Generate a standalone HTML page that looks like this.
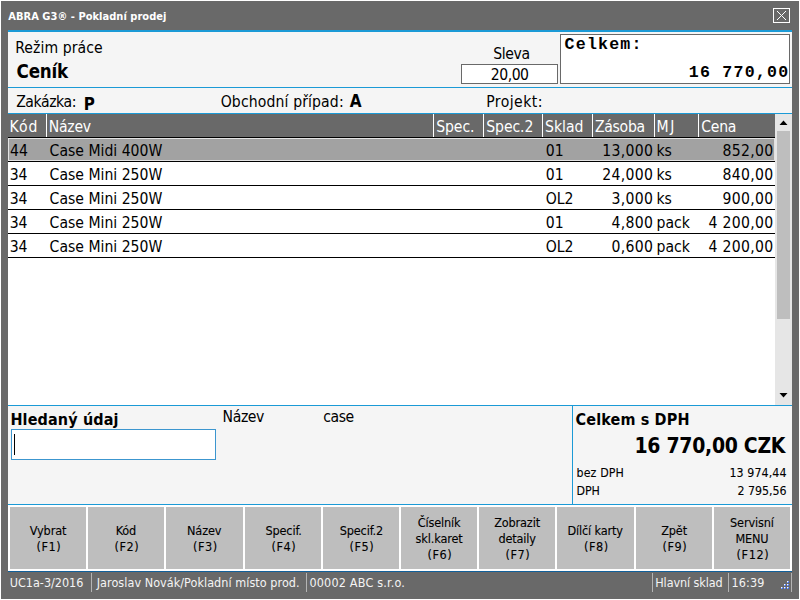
<!DOCTYPE html>
<html lang="cs"><head><meta charset="utf-8"><title>ABRA G3 - Pokladní prodej</title>
<style>
html,body{margin:0;padding:0;width:800px;height:600px;overflow:hidden;background:#fff}
body{position:relative;font-family:"DejaVu Sans Condensed","Liberation Sans",sans-serif;color:#000}
div,span{position:absolute;box-sizing:border-box}
.t{white-space:nowrap;display:block}
.sec{left:0;top:0;width:800px;height:600px}
.frame{left:1px;top:1px;width:798px;height:598px;background:#696969}
.bl{background:#1b9ad6;left:8px;width:784px;height:1px}
.panel{background:#f5f5f5;left:8px;width:784px}
.hsep{top:114px;width:1px;height:23px;background:#fff}
.rl{left:8px;width:767px;height:1px;background:#000}
.btn{top:507px;height:62px;background:#bebebe}
.ssep{top:573px;width:1px;height:19px;background:#b4b4b4}
</style></head><body>
<div class="frame"></div>
<div class="sec" id="titlebar">
<div style="left:773px;top:8px;width:17px;height:15px;border:1px solid #fff"></div>
<svg style="position:absolute;left:773px;top:8px" width="17" height="15" viewBox="0 0 17 15"><path d="M4 3 L13 12 M13 3 L4 12" stroke="#fff" stroke-width="1" fill="none"/></svg>
<span class="t" style="left:8.30px;top:9.80px;font-size:11px;line-height:14px;font-weight:700;color:#fff;letter-spacing:0.026px">ABRA G3® - Pokladní prodej</span>
</div>
<div class="sec" id="header-panel">
<div class="bl" style="top:30px;height:2px"></div>
<div class="panel" style="top:32px;height:55px"></div>
<div class="bl" style="top:87px"></div>
<div class="panel" style="top:88px;height:25px"></div>
<div class="bl" style="top:113px"></div>
<!-- Sleva input -->
<div style="left:461px;top:64px;width:97px;height:20px;background:#fff;border:1px solid #696969"></div>
<!-- Celkem box -->
<div style="left:560px;top:34px;width:230px;height:50px;background:#fff;border:1px solid #696969"></div>
<span class="t" style="left:15.20px;top:37.50px;font-size:15.6px;line-height:20px;letter-spacing:0.076px">Režim práce</span>
<span class="t" style="left:16.60px;top:59.60px;font-size:18.6px;line-height:24px;font-weight:700;letter-spacing:-0.216px">Ceník</span>
<span class="t" style="left:493.20px;top:43.75px;font-size:15.6px;line-height:20px;letter-spacing:-0.36px">Sleva</span>
<span class="t" style="left:490.70px;top:64.75px;font-size:15.6px;line-height:20px;letter-spacing:-0.45px">20,00</span>
<span class="t" style="left:564.60px;top:33.80px;font-size:16.6px;line-height:22px;font-weight:700;font-family:'Liberation Mono', monospace;letter-spacing:1.192px">Celkem:</span>
<span class="t" style="right:10.62px;top:61.70px;font-size:16.6px;line-height:22px;font-weight:700;font-family:'Liberation Mono', monospace;letter-spacing:1.217px">16 770,00</span>
<span class="t" style="left:16.20px;top:92.20px;font-size:15.6px;line-height:20px;letter-spacing:-0.423px">Zakázka:</span>
<span class="t" style="left:83.80px;top:92.90px;font-size:16.8px;line-height:22px;font-weight:700">P</span>
<span class="t" style="left:220.70px;top:92.20px;font-size:15.6px;line-height:20px;letter-spacing:0.128px">Obchodní případ:</span>
<span class="t" style="left:349.80px;top:90.40px;font-size:17px;line-height:22px;font-weight:700">A</span>
<span class="t" style="left:486.20px;top:92.20px;font-size:15.6px;line-height:20px;letter-spacing:0.45px">Projekt:</span>
</div>
<div class="sec" id="grid">
<div style="left:8px;top:114px;width:767px;height:291px;background:#fff"></div>
<div style="left:8px;top:114px;width:767px;height:23px;background:#696969"></div>
<div class="hsep" style="left:46px"></div><div class="hsep" style="left:433px"></div><div class="hsep" style="left:483px"></div><div class="hsep" style="left:542px"></div><div class="hsep" style="left:592px"></div><div class="hsep" style="left:654px"></div><div class="hsep" style="left:698px"></div>
<div class="rl" style="top:137px"></div>
<div style="left:8px;top:138px;width:767px;height:23px;background:#a2a2a2;border:1px solid #e2e2e2"></div>
<div class="rl" style="top:161px"></div><div class="rl" style="top:185px"></div><div class="rl" style="top:209px"></div><div class="rl" style="top:233px"></div><div class="rl" style="top:257px"></div>
<!-- scrollbar -->
<div style="left:775px;top:114px;width:17px;height:291px;background:#e6e6e6"></div>
<div style="left:777px;top:131px;width:13px;height:188px;background:#bebebe"></div>
<svg style="position:absolute;left:775px;top:114px" width="17" height="291" viewBox="0 0 17 291"><path d="M8.5 6.5 L12.5 11 L4.5 11 Z M4.5 279 L12.5 279 L8.5 283.5 Z" fill="#000"/></svg>
<span class="t" style="left:9.50px;top:116.80px;font-size:15.6px;line-height:20px;color:#fff;letter-spacing:0.999px">Kód</span>
<span class="t" style="left:48.80px;top:116.80px;font-size:15.6px;line-height:20px;color:#fff;letter-spacing:-0.284px">Název</span>
<span class="t" style="left:436.25px;top:116.80px;font-size:15.6px;line-height:20px;color:#fff;letter-spacing:-0.104px">Spec.</span>
<span class="t" style="left:486.25px;top:116.80px;font-size:15.6px;line-height:20px;color:#fff;letter-spacing:-0.074px">Spec.2</span>
<span class="t" style="left:545.00px;top:116.80px;font-size:15.6px;line-height:20px;color:#fff;letter-spacing:-0.007px">Sklad</span>
<span class="t" style="left:595.00px;top:116.80px;font-size:15.6px;line-height:20px;color:#fff;letter-spacing:-0.301px">Zásoba</span>
<span class="t" style="left:656.50px;top:116.80px;font-size:15.6px;line-height:20px;color:#fff;letter-spacing:1.6px">MJ</span>
<span class="t" style="left:701.25px;top:116.80px;font-size:15.6px;line-height:20px;color:#fff;letter-spacing:-0.276px">Cena</span>
<span class="t" style="left:10.10px;top:141.00px;font-size:15.6px;line-height:20px">44</span>
<span class="t" style="left:49.60px;top:141.00px;font-size:15.6px;line-height:20px">Case Midi 400W</span>
<span class="t" style="left:545.75px;top:141.00px;font-size:15.6px;line-height:20px">01</span>
<span class="t" style="right:146.77px;top:141.00px;font-size:15.6px;line-height:20px;letter-spacing:0.3px">13,000</span>
<span class="t" style="left:656.50px;top:141.00px;font-size:15.6px;line-height:20px">ks</span>
<span class="t" style="right:26.57px;top:141.00px;font-size:15.6px;line-height:20px;letter-spacing:0.3px">852,00</span>
<span class="t" style="left:9.70px;top:165.00px;font-size:15.6px;line-height:20px">34</span>
<span class="t" style="left:49.60px;top:165.00px;font-size:15.6px;line-height:20px">Case Mini 250W</span>
<span class="t" style="left:545.75px;top:165.00px;font-size:15.6px;line-height:20px">01</span>
<span class="t" style="right:146.77px;top:165.00px;font-size:15.6px;line-height:20px;letter-spacing:0.3px">24,000</span>
<span class="t" style="left:656.50px;top:165.00px;font-size:15.6px;line-height:20px">ks</span>
<span class="t" style="right:26.57px;top:165.00px;font-size:15.6px;line-height:20px;letter-spacing:0.3px">840,00</span>
<span class="t" style="left:9.70px;top:189.00px;font-size:15.6px;line-height:20px">34</span>
<span class="t" style="left:49.60px;top:189.00px;font-size:15.6px;line-height:20px">Case Mini 250W</span>
<span class="t" style="left:545.75px;top:189.00px;font-size:15.6px;line-height:20px">OL2</span>
<span class="t" style="right:146.77px;top:189.00px;font-size:15.6px;line-height:20px;letter-spacing:0.3px">3,000</span>
<span class="t" style="left:656.50px;top:189.00px;font-size:15.6px;line-height:20px">ks</span>
<span class="t" style="right:26.57px;top:189.00px;font-size:15.6px;line-height:20px;letter-spacing:0.3px">900,00</span>
<span class="t" style="left:9.70px;top:213.00px;font-size:15.6px;line-height:20px">34</span>
<span class="t" style="left:49.60px;top:213.00px;font-size:15.6px;line-height:20px">Case Mini 250W</span>
<span class="t" style="left:545.75px;top:213.00px;font-size:15.6px;line-height:20px">01</span>
<span class="t" style="right:146.77px;top:213.00px;font-size:15.6px;line-height:20px;letter-spacing:0.3px">4,800</span>
<span class="t" style="left:656.50px;top:213.00px;font-size:15.6px;line-height:20px">pack</span>
<span class="t" style="right:26.57px;top:213.00px;font-size:15.6px;line-height:20px;letter-spacing:0.3px">4 200,00</span>
<span class="t" style="left:9.70px;top:237.00px;font-size:15.6px;line-height:20px">34</span>
<span class="t" style="left:49.60px;top:237.00px;font-size:15.6px;line-height:20px">Case Mini 250W</span>
<span class="t" style="left:545.75px;top:237.00px;font-size:15.6px;line-height:20px">OL2</span>
<span class="t" style="right:146.77px;top:237.00px;font-size:15.6px;line-height:20px;letter-spacing:0.3px">0,600</span>
<span class="t" style="left:656.50px;top:237.00px;font-size:15.6px;line-height:20px">pack</span>
<span class="t" style="right:26.57px;top:237.00px;font-size:15.6px;line-height:20px;letter-spacing:0.3px">4 200,00</span>
</div>
<div class="sec" id="search-panel">
<div class="bl" style="top:405px"></div>
<div class="panel" style="top:406px;height:98px"></div>
<div style="left:572px;top:405px;width:1px;height:100px;background:#1b9ad6"></div>
<div class="bl" style="top:504px"></div>
<div style="left:11px;top:429px;width:205px;height:31px;background:#fff;border:1px solid #3c96cf"></div>
<div style="left:14px;top:434px;width:1px;height:21px;background:#000"></div>
<span class="t" style="left:10.40px;top:409.10px;font-size:16px;line-height:21px;font-weight:700;letter-spacing:0.14px">Hledaný údaj</span>
<span class="t" style="left:222.60px;top:406.80px;font-size:15.6px;line-height:20px;letter-spacing:-0.396px">Název</span>
<span class="t" style="left:323.30px;top:406.80px;font-size:15.6px;line-height:20px;letter-spacing:-0.45px">case</span>
<span class="t" style="left:575.60px;top:408.70px;font-size:16px;line-height:21px;font-weight:700;letter-spacing:0.141px">Celkem s DPH</span>
<span class="t" style="right:14.85px;top:432.80px;font-size:21px;line-height:27px;font-weight:700;letter-spacing:-0.3px">16 770,00 CZK</span>
<span class="t" style="left:576.50px;top:464.80px;font-size:12.3px;line-height:16px;letter-spacing:0.126px;-webkit-text-stroke:0.1px #000">bez DPH</span>
<span class="t" style="right:13.35px;top:464.80px;font-size:12.3px;line-height:16px;letter-spacing:0.107px;-webkit-text-stroke:0.1px #000">13 974,44</span>
<span class="t" style="left:576.50px;top:482.50px;font-size:12.3px;line-height:16px;letter-spacing:-0.045px;-webkit-text-stroke:0.1px #000">DPH</span>
<span class="t" style="right:13.50px;top:482.50px;font-size:12.3px;line-height:16px;letter-spacing:-0.044px;-webkit-text-stroke:0.1px #000">2 795,56</span>
</div>
<div class="sec" id="buttons">
<div style="left:8px;top:505px;width:784px;height:66px;background:#fff"></div>
<div class="btn" style="left:10px;width:76px"></div><div class="btn" style="left:88px;width:76px"></div><div class="btn" style="left:166px;width:77px"></div><div class="btn" style="left:245px;width:76px"></div><div class="btn" style="left:323px;width:76px"></div><div class="btn" style="left:401px;width:76px"></div><div class="btn" style="left:479px;width:76px"></div><div class="btn" style="left:557px;width:77px"></div><div class="btn" style="left:636px;width:76px"></div><div class="btn" style="left:714px;width:76px"></div>
<span class="t" style="left:3.05px;width:90px;text-align:center;top:523.10px;font-size:12.6px;line-height:16px;letter-spacing:-0.15px;-webkit-text-stroke:0.1px #000">Vybrat</span>
<span class="t" style="left:3.89px;width:90px;text-align:center;top:539.20px;font-size:12.6px;line-height:16px;letter-spacing:0.55px;-webkit-text-stroke:0.1px #000">(F1)</span>
<span class="t" style="left:80.93px;width:90px;text-align:center;top:523.10px;font-size:12.6px;line-height:16px;letter-spacing:-0.15px;-webkit-text-stroke:0.1px #000">Kód</span>
<span class="t" style="left:81.89px;width:90px;text-align:center;top:539.20px;font-size:12.6px;line-height:16px;letter-spacing:0.55px;-webkit-text-stroke:0.1px #000">(F2)</span>
<span class="t" style="left:159.18px;width:90px;text-align:center;top:523.10px;font-size:12.6px;line-height:16px;letter-spacing:-0.15px;-webkit-text-stroke:0.1px #000">Název</span>
<span class="t" style="left:160.39px;width:90px;text-align:center;top:539.20px;font-size:12.6px;line-height:16px;letter-spacing:0.55px;-webkit-text-stroke:0.1px #000">(F3)</span>
<span class="t" style="left:238.63px;width:90px;text-align:center;top:523.10px;font-size:12.6px;line-height:16px;letter-spacing:-0.15px;-webkit-text-stroke:0.1px #000">Specif.</span>
<span class="t" style="left:238.89px;width:90px;text-align:center;top:539.20px;font-size:12.6px;line-height:16px;letter-spacing:0.55px;-webkit-text-stroke:0.1px #000">(F4)</span>
<span class="t" style="left:316.43px;width:90px;text-align:center;top:523.10px;font-size:12.6px;line-height:16px;letter-spacing:-0.15px;-webkit-text-stroke:0.1px #000">Specif.2</span>
<span class="t" style="left:316.89px;width:90px;text-align:center;top:539.20px;font-size:12.6px;line-height:16px;letter-spacing:0.55px;-webkit-text-stroke:0.1px #000">(F5)</span>
<span class="t" style="left:394.11px;width:90px;text-align:center;top:515.10px;font-size:12.6px;line-height:16px;letter-spacing:-0.15px;-webkit-text-stroke:0.1px #000">Číselník</span>
<span class="t" style="left:394.05px;width:90px;text-align:center;top:531.10px;font-size:12.6px;line-height:16px;letter-spacing:-0.15px;-webkit-text-stroke:0.1px #000">skl.karet</span>
<span class="t" style="left:394.89px;width:90px;text-align:center;top:547.00px;font-size:12.6px;line-height:16px;letter-spacing:0.55px;-webkit-text-stroke:0.1px #000">(F6)</span>
<span class="t" style="left:472.05px;width:90px;text-align:center;top:515.10px;font-size:12.6px;line-height:16px;letter-spacing:-0.15px;-webkit-text-stroke:0.1px #000">Zobrazit</span>
<span class="t" style="left:472.18px;width:90px;text-align:center;top:531.10px;font-size:12.6px;line-height:16px;letter-spacing:-0.15px;-webkit-text-stroke:0.1px #000">detaily</span>
<span class="t" style="left:472.89px;width:90px;text-align:center;top:547.00px;font-size:12.6px;line-height:16px;letter-spacing:0.55px;-webkit-text-stroke:0.1px #000">(F7)</span>
<span class="t" style="left:550.18px;width:90px;text-align:center;top:523.10px;font-size:12.6px;line-height:16px;letter-spacing:-0.15px;-webkit-text-stroke:0.1px #000">Dílčí karty</span>
<span class="t" style="left:551.39px;width:90px;text-align:center;top:539.20px;font-size:12.6px;line-height:16px;letter-spacing:0.55px;-webkit-text-stroke:0.1px #000">(F8)</span>
<span class="t" style="left:629.05px;width:90px;text-align:center;top:523.10px;font-size:12.6px;line-height:16px;letter-spacing:-0.15px;-webkit-text-stroke:0.1px #000">Zpět</span>
<span class="t" style="left:629.89px;width:90px;text-align:center;top:539.20px;font-size:12.6px;line-height:16px;letter-spacing:0.55px;-webkit-text-stroke:0.1px #000">(F9)</span>
<span class="t" style="left:706.90px;width:90px;text-align:center;top:515.10px;font-size:12.6px;line-height:16px;letter-spacing:-0.15px;-webkit-text-stroke:0.1px #000">Servisní</span>
<span class="t" style="left:706.98px;width:90px;text-align:center;top:531.10px;font-size:12.6px;line-height:16px;letter-spacing:-0.15px;-webkit-text-stroke:0.1px #000">MENU</span>
<span class="t" style="left:707.89px;width:90px;text-align:center;top:547.00px;font-size:12.6px;line-height:16px;letter-spacing:0.55px;-webkit-text-stroke:0.1px #000">(F12)</span>
</div>
<div class="sec" id="statusbar">
<div style="left:8px;top:571px;width:784px;height:1px;background:#12609a"></div>
<div class="ssep" style="left:91px"></div><div class="ssep" style="left:305.6px"></div><div class="ssep" style="left:652.4px"></div><div class="ssep" style="left:728px"></div><div class="ssep" style="left:791px"></div>
<svg style="position:absolute;left:780px;top:580px" width="10" height="10" viewBox="0 0 10 10" shape-rendering="crispEdges"><rect x="7" y="1" width="2" height="2" fill="#7d9df2"/><rect x="7" y="1" width="1" height="1" fill="#fff"/><rect x="8" y="2" width="1" height="1" fill="#3f6fea"/><rect x="4" y="4" width="2" height="2" fill="#7d9df2"/><rect x="4" y="4" width="1" height="1" fill="#fff"/><rect x="5" y="5" width="1" height="1" fill="#3f6fea"/><rect x="7" y="4" width="2" height="2" fill="#7d9df2"/><rect x="7" y="4" width="1" height="1" fill="#fff"/><rect x="8" y="5" width="1" height="1" fill="#3f6fea"/><rect x="1" y="7" width="2" height="2" fill="#7d9df2"/><rect x="1" y="7" width="1" height="1" fill="#fff"/><rect x="2" y="8" width="1" height="1" fill="#3f6fea"/><rect x="4" y="7" width="2" height="2" fill="#7d9df2"/><rect x="4" y="7" width="1" height="1" fill="#fff"/><rect x="5" y="8" width="1" height="1" fill="#3f6fea"/><rect x="7" y="7" width="2" height="2" fill="#7d9df2"/><rect x="7" y="7" width="1" height="1" fill="#fff"/><rect x="8" y="8" width="1" height="1" fill="#3f6fea"/></svg>
<span class="t" style="left:9.75px;top:575.00px;font-size:12.5px;line-height:16px;color:#f4f4f4;letter-spacing:-0.01px">UC1a-3/2016</span>
<span class="t" style="left:96.75px;top:575.00px;font-size:12.5px;line-height:16px;color:#f4f4f4;letter-spacing:0.046px">Jaroslav Novák/Pokladní místo prod.</span>
<span class="t" style="left:309.40px;top:575.00px;font-size:12.5px;line-height:16px;color:#f4f4f4;letter-spacing:0.185px">00002 ABC s.r.o.</span>
<span class="t" style="left:655.25px;top:575.00px;font-size:12.5px;line-height:16px;color:#f4f4f4;letter-spacing:-0.099px">Hlavní sklad</span>
<span class="t" style="left:731.50px;top:575.00px;font-size:12.5px;line-height:16px;color:#f4f4f4;letter-spacing:0.125px">16:39</span>
</div>
</body></html>
